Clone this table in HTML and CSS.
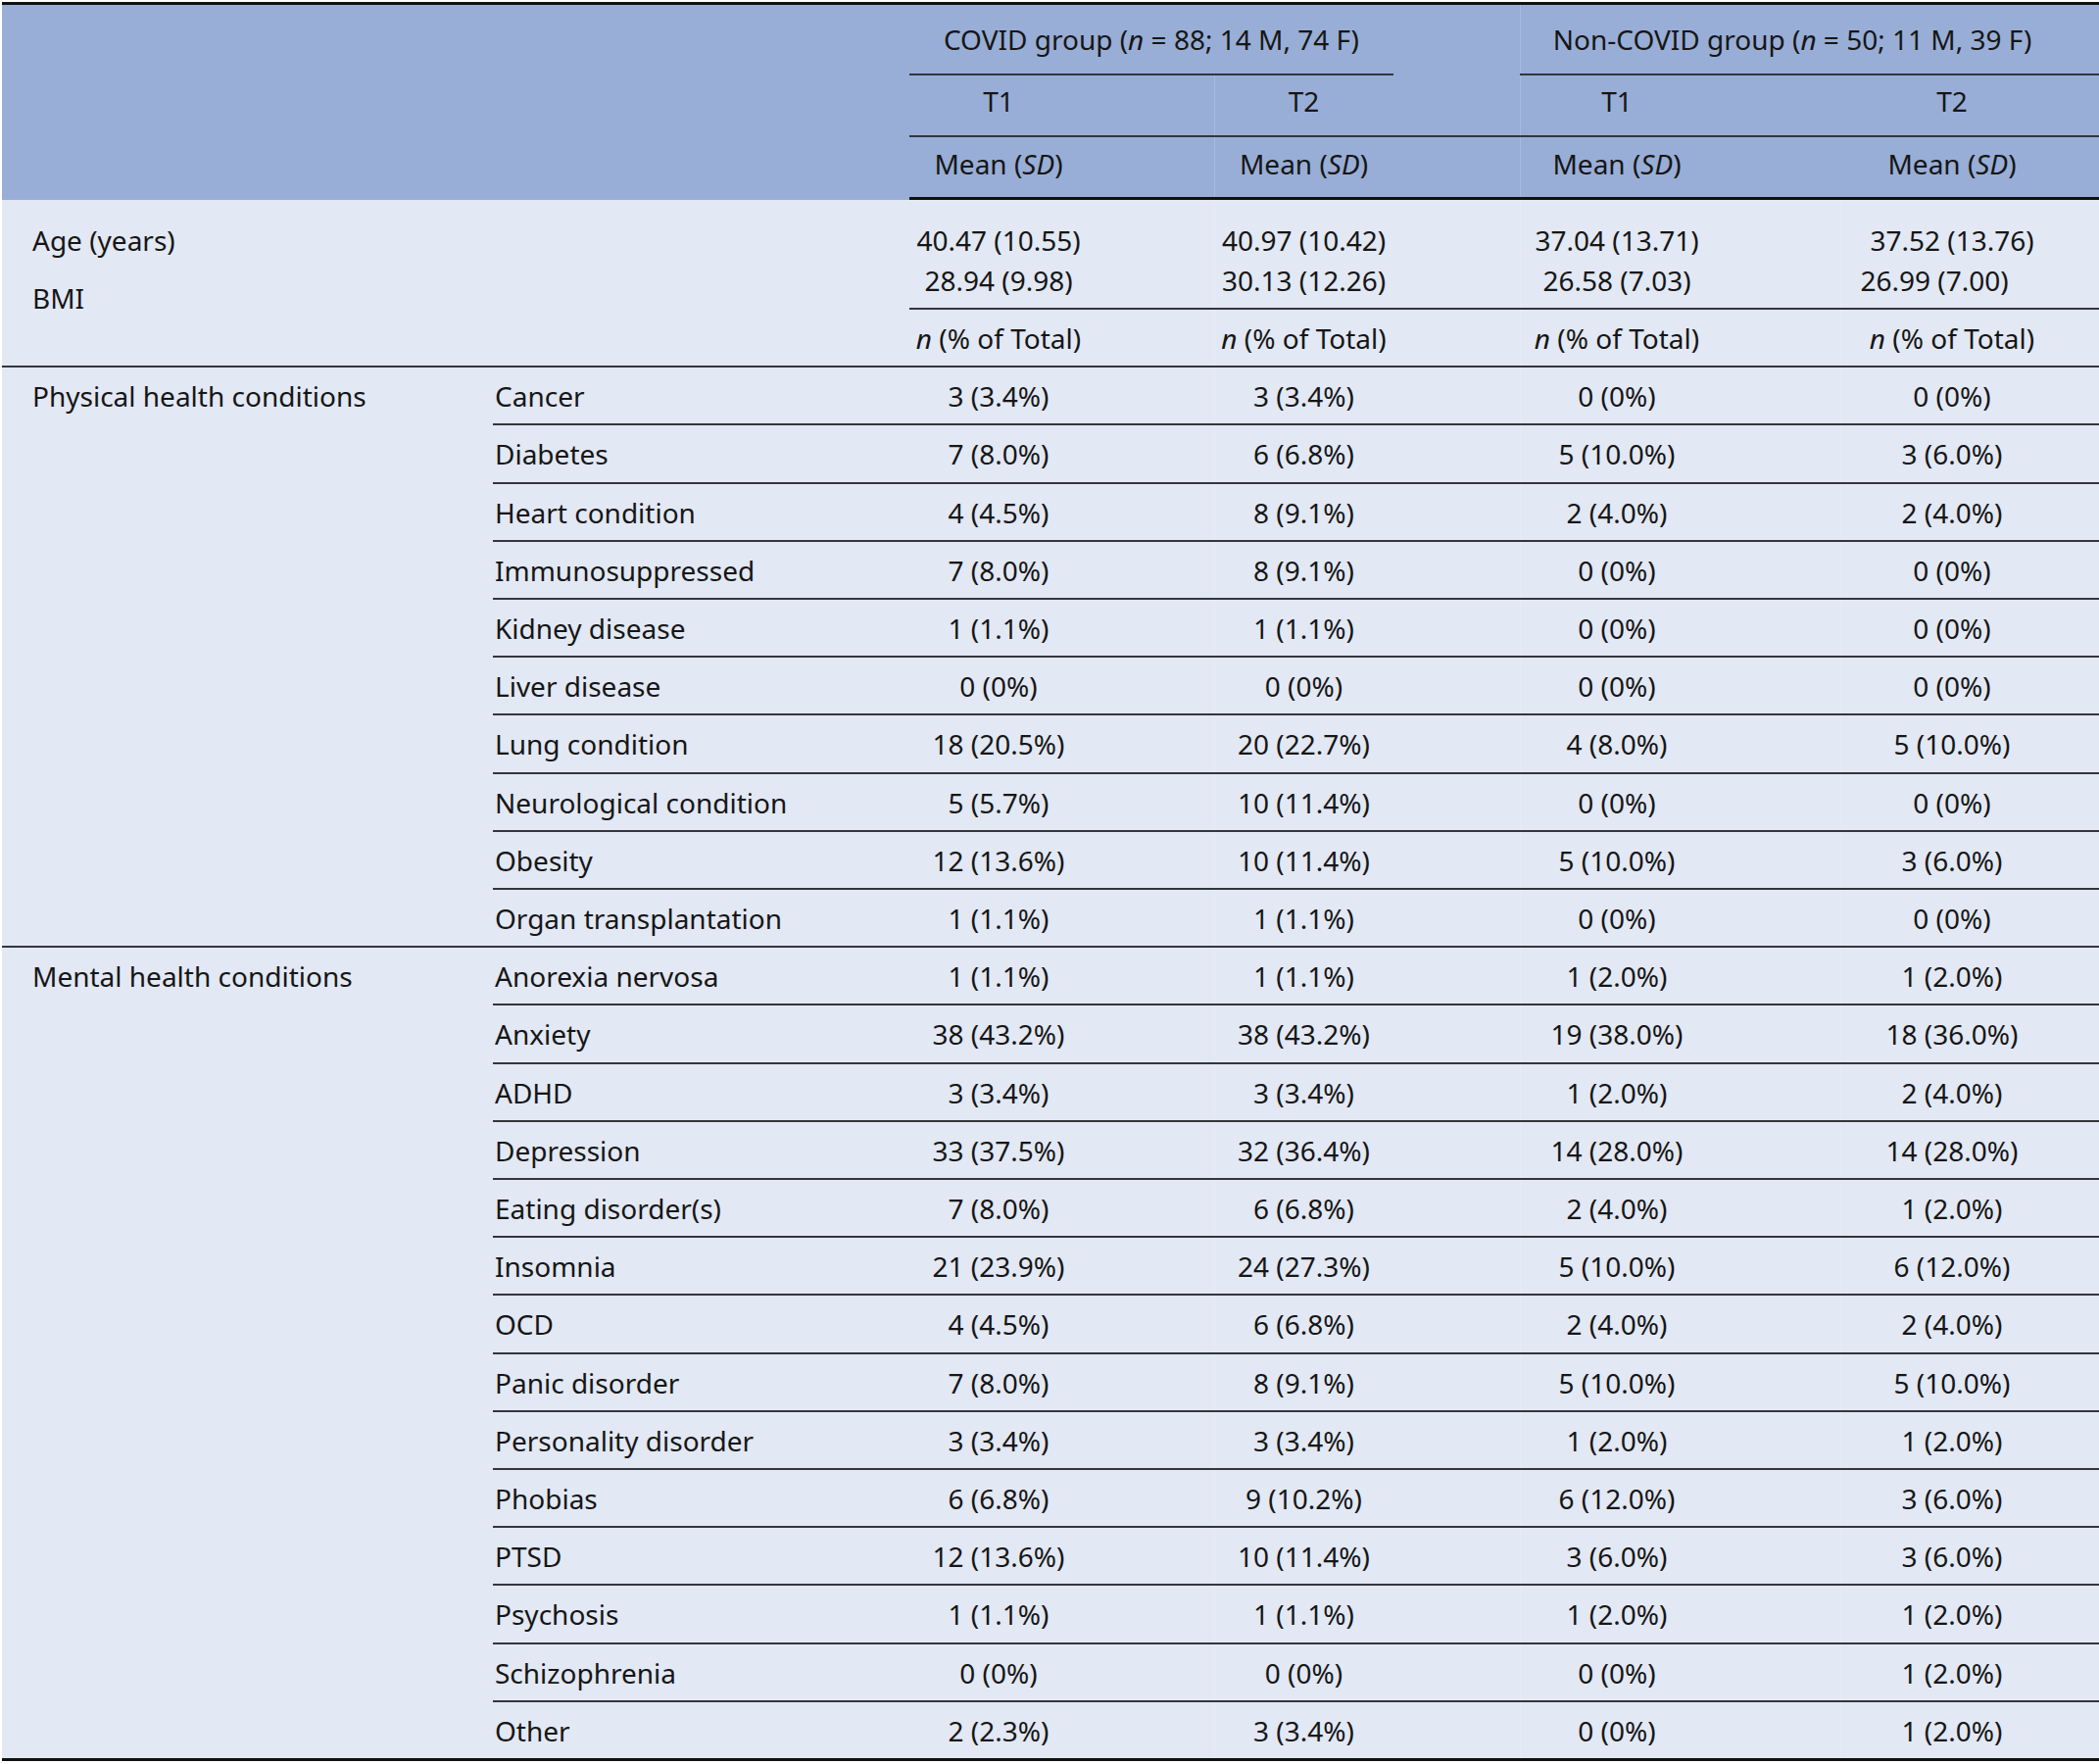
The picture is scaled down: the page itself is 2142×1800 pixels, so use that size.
FILE: index.html
```html
<!DOCTYPE html>
<html lang="en">
<head>
<meta charset="utf-8">
<title>Health conditions table</title>
<link rel="stylesheet" href="styles.css">
</head>
<body>
<table class="tbl">
  <colgroup>
    <col class="w1"><col class="w2"><col class="w3"><col class="w4"><col class="w5"><col class="w6">
  </colgroup>
  <thead>
    <tr class="grp-row">
      <th class="blank" colspan="2" rowspan="3"></th>
      <th class="g1" colspan="2"><div class="gl">COVID group (<i>n</i> = 88; 14 M, 74 F)</div></th>
      <th class="g2 sep" colspan="2"><div class="gl gl2">Non-COVID group (<i>n</i> = 50; 11 M, 39 F)</div></th>
    </tr>
    <tr class="t-row">
      <th class="h c3">T1</th><th class="h c4 sep">T2</th><th class="h c5 sep">T1</th><th class="h c6">T2</th>
    </tr>
    <tr class="m-row">
      <th class="h c3">Mean (<i>SD</i>)</th><th class="h c4 sep">Mean (<i>SD</i>)</th><th class="h c5 sep">Mean (<i>SD</i>)</th><th class="h c6">Mean (<i>SD</i>)</th>
    </tr>
  </thead>
  <tbody>
    <tr class="stat-row">
      <td class="lab" colspan="2" rowspan="2"><div>Age (years)</div><div>BMI</div></td>
      <td class="sv c3">40.47 (10.55)<br>28.94 (9.98)</td>
      <td class="sv c4 sep">40.97 (10.42)<br>30.13 (12.26)</td>
      <td class="sv c5 sep">37.04 (13.71)<br>26.58 (7.03)</td>
      <td class="sv c6 sep">37.52 (13.76)<br><span class="nudge">26.99 (7.00)</span></td>
    </tr>
    <tr class="n-row">
      <td class="v c3"><i>n</i> (% of Total)</td>
      <td class="v c4 sep"><i>n</i> (% of Total)</td>
      <td class="v c5 sep"><i>n</i> (% of Total)</td>
      <td class="v c6 sep"><i>n</i> (% of Total)</td>
    </tr>

    <tr><td class="sec" rowspan="10">Physical health conditions</td><td class="item">Cancer</td><td class="v c3">3 (3.4%)</td><td class="v c4 sep">3 (3.4%)</td><td class="v c5 sep">0 (0%)</td><td class="v c6 sep">0 (0%)</td></tr>
    <tr><td class="item">Diabetes</td><td class="v c3">7 (8.0%)</td><td class="v c4 sep">6 (6.8%)</td><td class="v c5 sep">5 (10.0%)</td><td class="v c6 sep">3 (6.0%)</td></tr>
    <tr><td class="item">Heart condition</td><td class="v c3">4 (4.5%)</td><td class="v c4 sep">8 (9.1%)</td><td class="v c5 sep">2 (4.0%)</td><td class="v c6 sep">2 (4.0%)</td></tr>
    <tr><td class="item">Immunosuppressed</td><td class="v c3">7 (8.0%)</td><td class="v c4 sep">8 (9.1%)</td><td class="v c5 sep">0 (0%)</td><td class="v c6 sep">0 (0%)</td></tr>
    <tr><td class="item">Kidney disease</td><td class="v c3">1 (1.1%)</td><td class="v c4 sep">1 (1.1%)</td><td class="v c5 sep">0 (0%)</td><td class="v c6 sep">0 (0%)</td></tr>
    <tr><td class="item">Liver disease</td><td class="v c3">0 (0%)</td><td class="v c4 sep">0 (0%)</td><td class="v c5 sep">0 (0%)</td><td class="v c6 sep">0 (0%)</td></tr>
    <tr><td class="item">Lung condition</td><td class="v c3">18 (20.5%)</td><td class="v c4 sep">20 (22.7%)</td><td class="v c5 sep">4 (8.0%)</td><td class="v c6 sep">5 (10.0%)</td></tr>
    <tr><td class="item">Neurological condition</td><td class="v c3">5 (5.7%)</td><td class="v c4 sep">10 (11.4%)</td><td class="v c5 sep">0 (0%)</td><td class="v c6 sep">0 (0%)</td></tr>
    <tr><td class="item">Obesity</td><td class="v c3">12 (13.6%)</td><td class="v c4 sep">10 (11.4%)</td><td class="v c5 sep">5 (10.0%)</td><td class="v c6 sep">3 (6.0%)</td></tr>
    <tr><td class="item">Organ transplantation</td><td class="v c3">1 (1.1%)</td><td class="v c4 sep">1 (1.1%)</td><td class="v c5 sep">0 (0%)</td><td class="v c6 sep">0 (0%)</td></tr>

    <tr><td class="sec last" rowspan="14">Mental health conditions</td><td class="item">Anorexia nervosa</td><td class="v c3">1 (1.1%)</td><td class="v c4 sep">1 (1.1%)</td><td class="v c5 sep">1 (2.0%)</td><td class="v c6 sep">1 (2.0%)</td></tr>
    <tr><td class="item">Anxiety</td><td class="v c3">38 (43.2%)</td><td class="v c4 sep">38 (43.2%)</td><td class="v c5 sep">19 (38.0%)</td><td class="v c6 sep">18 (36.0%)</td></tr>
    <tr><td class="item">ADHD</td><td class="v c3">3 (3.4%)</td><td class="v c4 sep">3 (3.4%)</td><td class="v c5 sep">1 (2.0%)</td><td class="v c6 sep">2 (4.0%)</td></tr>
    <tr><td class="item">Depression</td><td class="v c3">33 (37.5%)</td><td class="v c4 sep">32 (36.4%)</td><td class="v c5 sep">14 (28.0%)</td><td class="v c6 sep">14 (28.0%)</td></tr>
    <tr><td class="item">Eating disorder(s)</td><td class="v c3">7 (8.0%)</td><td class="v c4 sep">6 (6.8%)</td><td class="v c5 sep">2 (4.0%)</td><td class="v c6 sep">1 (2.0%)</td></tr>
    <tr><td class="item">Insomnia</td><td class="v c3">21 (23.9%)</td><td class="v c4 sep">24 (27.3%)</td><td class="v c5 sep">5 (10.0%)</td><td class="v c6 sep">6 (12.0%)</td></tr>
    <tr><td class="item">OCD</td><td class="v c3">4 (4.5%)</td><td class="v c4 sep">6 (6.8%)</td><td class="v c5 sep">2 (4.0%)</td><td class="v c6 sep">2 (4.0%)</td></tr>
    <tr><td class="item">Panic disorder</td><td class="v c3">7 (8.0%)</td><td class="v c4 sep">8 (9.1%)</td><td class="v c5 sep">5 (10.0%)</td><td class="v c6 sep">5 (10.0%)</td></tr>
    <tr><td class="item">Personality disorder</td><td class="v c3">3 (3.4%)</td><td class="v c4 sep">3 (3.4%)</td><td class="v c5 sep">1 (2.0%)</td><td class="v c6 sep">1 (2.0%)</td></tr>
    <tr><td class="item">Phobias</td><td class="v c3">6 (6.8%)</td><td class="v c4 sep">9 (10.2%)</td><td class="v c5 sep">6 (12.0%)</td><td class="v c6 sep">3 (6.0%)</td></tr>
    <tr><td class="item">PTSD</td><td class="v c3">12 (13.6%)</td><td class="v c4 sep">10 (11.4%)</td><td class="v c5 sep">3 (6.0%)</td><td class="v c6 sep">3 (6.0%)</td></tr>
    <tr><td class="item">Psychosis</td><td class="v c3">1 (1.1%)</td><td class="v c4 sep">1 (1.1%)</td><td class="v c5 sep">1 (2.0%)</td><td class="v c6 sep">1 (2.0%)</td></tr>
    <tr><td class="item">Schizophrenia</td><td class="v c3">0 (0%)</td><td class="v c4 sep">0 (0%)</td><td class="v c5 sep">0 (0%)</td><td class="v c6 sep">1 (2.0%)</td></tr>
    <tr class="final"><td class="item">Other</td><td class="v c3">2 (2.3%)</td><td class="v c4 sep">3 (3.4%)</td><td class="v c5 sep">0 (0%)</td><td class="v c6 sep">1 (2.0%)</td></tr>
  </tbody>
</table>
</body>
</html>
```

FILE: styles.css
```css
html, body {
  margin: 0;
  padding: 0;
  background: #ffffff;
}
body {
  padding: 2px 0 0 2px;
  overflow: hidden;
  font-family: "Noto Sans", "Open Sans", sans-serif;
  font-size: 28px;
  color: #161616;
}
.tbl {
  border-collapse: separate;
  border-spacing: 0;
  table-layout: fixed;
  width: 2140px;
  background: #e2e8f4;
  border-top: 3px solid #111111;
  border-bottom: 3px solid #111111;
}
.w1 { width: 501px; }
.w2 { width: 425px; }
.w3 { width: 311px; }
.w4 { width: 312px; }
.w5 { width: 327px; }
.w6 { width: 264px; }

th, td {
  padding: 0;
  font-weight: normal;
  white-space: nowrap;
}
thead th {
  background: #98aed6;
}
i { font-style: italic; }

/* header */
.g1 {
  padding-right: 129px;
}
.gl {
  line-height: 70px;
  text-align: center;
  border-bottom: 2px solid #33363d;
}
.gl2 {
  padding-right: 35px;
}
.h {
  text-align: center;
}
.t-row .h {
  line-height: 53px;
  padding-bottom: 8px;
  border-bottom: 2px solid #33363d;
}
.m-row .h {
  line-height: 55px;
  padding-bottom: 6px;
  border-bottom: 3px solid #111111;
}

/* columns */
.c3, .c4, .c5 { padding-right: 129px; }
.c6 { padding-right: 36px; }
.sep {
  box-shadow: inset 1px 0 0 rgba(255, 255, 255, 0.16);
}

/* body */
.lab {
  vertical-align: top;
  padding: 12px 0 0 31px;
  line-height: 59px;
  border-bottom: 2px solid #33363d;
}
.sv {
  text-align: center;
  vertical-align: top;
  padding-top: 21px;
  padding-bottom: 7px;
  line-height: 41px;
  border-bottom: 2px solid #33363d;
}
.nudge {
  display: inline-block;
  padding-right: 36px;
}
.v {
  text-align: center;
  padding-top: 1px;
  line-height: 56.2px;
  border-bottom: 2px solid #33363d;
}
.item {
  padding-left: 2px;
  padding-top: 1px;
  line-height: 56.2px;
  border-bottom: 2px solid #33363d;
}
.sec {
  vertical-align: top;
  padding-left: 31px;
  padding-top: 1px;
  line-height: 56.2px;
  border-bottom: 2px solid #33363d;
}
.sec.last {
  border-bottom: none;
}
.final td {
  border-bottom: none;
}
```
